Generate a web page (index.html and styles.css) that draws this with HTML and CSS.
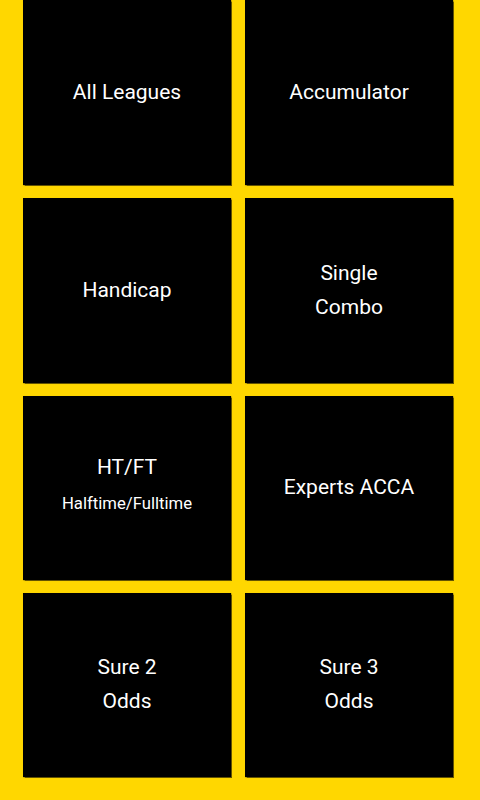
FILE: index.html
```html
<!DOCTYPE html>
<html>
<head>
<meta charset="utf-8">
<link rel="stylesheet" href="styles.css">
</head>
<body>
<div class="grid">
  <div class="tile"><span class="line">All Leagues</span></div>
  <div class="tile"><span class="line">Accumulator</span></div>
  <div class="tile"><span class="line">Handicap</span></div>
  <div class="tile"><span class="line">Single</span><span class="line">Combo</span></div>
  <div class="tile"><span class="line">HT/FT</span><span class="line small">Halftime/Fulltime</span></div>
  <div class="tile"><span class="line">Experts ACCA</span></div>
  <div class="tile"><span class="line">Sure 2</span><span class="line">Odds</span></div>
  <div class="tile"><span class="line">Sure 3</span><span class="line">Odds</span></div>
</div>
</body>
</html>
```
FILE: styles.css
```css
html, body {
  margin: 0;
  padding: 0;
  background: #FFD700;
  width: 480px;
  height: 800px;
  overflow: hidden;
}
.grid {
  display: grid;
  grid-template-columns: 208px 208px;
  grid-template-rows: 185px 185px 184px 184px;
  column-gap: 14px;
  row-gap: 13px;
  padding: 0 27px 23px 23px;
}
.tile {
  background: #000;
  box-shadow: 0 0 1px 0.5px rgba(60, 50, 0, 0.8);
  display: flex;
  flex-direction: column;
  align-items: center;
  justify-content: center;
  color: #fff;
  font-family: Roboto, "Liberation Sans", sans-serif;
  font-size: 21px;
  line-height: 34px;
  text-align: center;
  padding-bottom: 2px;
}
.small {
  font-size: 16.7px;
  line-height: 40px;
  padding-bottom: 0;
}
```
